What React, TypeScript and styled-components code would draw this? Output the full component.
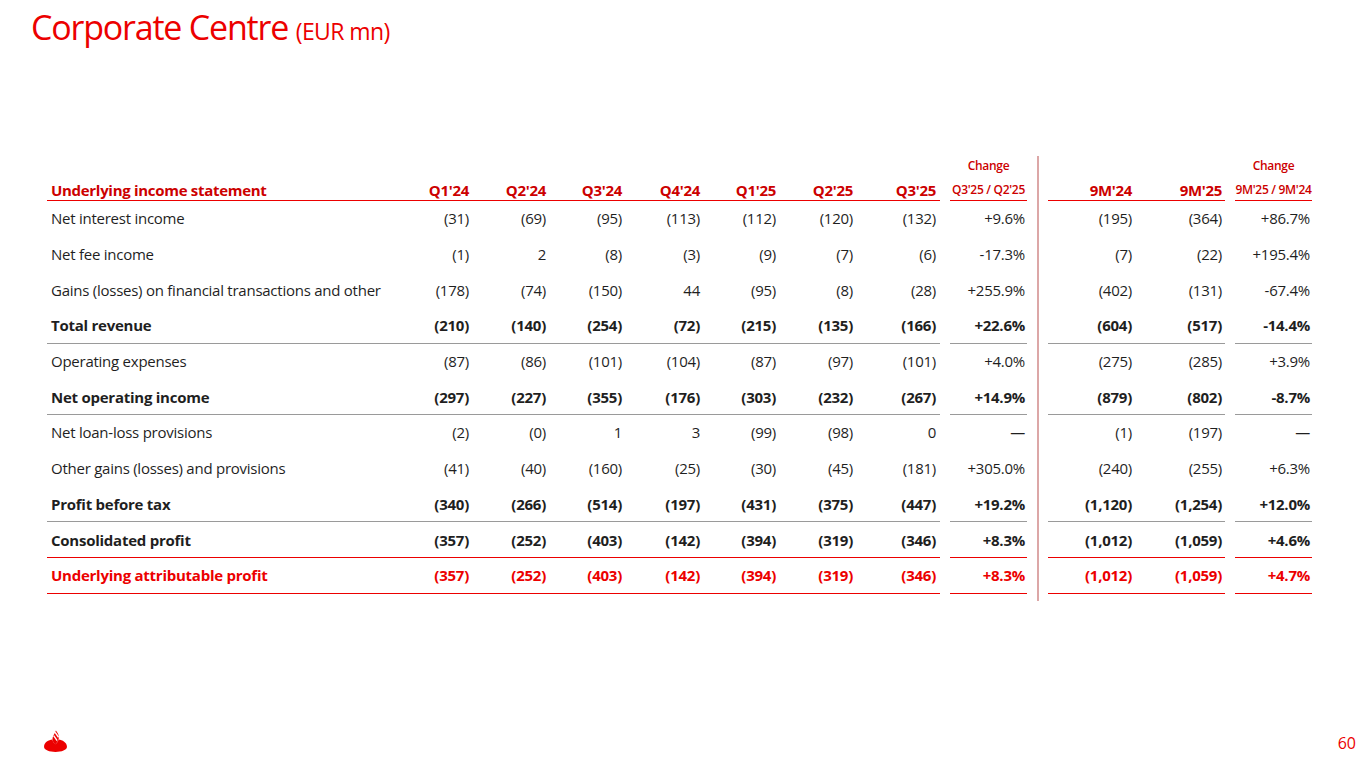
import React from "react";
import styled, { createGlobalStyle } from "styled-components";

const RED = "#ec0000";
const HEAD_RED = "#cc0000";
const INK = "#1f1f1f";

type Line = "none" | "gray" | "red";

type RowData = {
  label: string;
  q: string[];
  qChange: string;
  nine: string[];
  nineChange: string;
  bold?: boolean;
  red?: boolean;
  line?: Line;
};

const rows: RowData[] = [
  { label: "Net interest income", q: ["(31)", "(69)", "(95)", "(113)", "(112)", "(120)", "(132)"], qChange: "+9.6%", nine: ["(195)", "(364)"], nineChange: "+86.7%" },
  { label: "Net fee income", q: ["(1)", "2", "(8)", "(3)", "(9)", "(7)", "(6)"], qChange: "-17.3%", nine: ["(7)", "(22)"], nineChange: "+195.4%" },
  { label: "Gains (losses) on financial transactions and other", q: ["(178)", "(74)", "(150)", "44", "(95)", "(8)", "(28)"], qChange: "+255.9%", nine: ["(402)", "(131)"], nineChange: "-67.4%" },
  { label: "Total revenue", q: ["(210)", "(140)", "(254)", "(72)", "(215)", "(135)", "(166)"], qChange: "+22.6%", nine: ["(604)", "(517)"], nineChange: "-14.4%", bold: true, line: "gray" },
  { label: "Operating expenses", q: ["(87)", "(86)", "(101)", "(104)", "(87)", "(97)", "(101)"], qChange: "+4.0%", nine: ["(275)", "(285)"], nineChange: "+3.9%" },
  { label: "Net operating income", q: ["(297)", "(227)", "(355)", "(176)", "(303)", "(232)", "(267)"], qChange: "+14.9%", nine: ["(879)", "(802)"], nineChange: "-8.7%", bold: true, line: "gray" },
  { label: "Net loan-loss provisions", q: ["(2)", "(0)", "1", "3", "(99)", "(98)", "0"], qChange: "—", nine: ["(1)", "(197)"], nineChange: "—" },
  { label: "Other gains (losses) and provisions", q: ["(41)", "(40)", "(160)", "(25)", "(30)", "(45)", "(181)"], qChange: "+305.0%", nine: ["(240)", "(255)"], nineChange: "+6.3%" },
  { label: "Profit before tax", q: ["(340)", "(266)", "(514)", "(197)", "(431)", "(375)", "(447)"], qChange: "+19.2%", nine: ["(1,120)", "(1,254)"], nineChange: "+12.0%", bold: true, line: "gray" },
  { label: "Consolidated profit", q: ["(357)", "(252)", "(403)", "(142)", "(394)", "(319)", "(346)"], qChange: "+8.3%", nine: ["(1,012)", "(1,059)"], nineChange: "+4.6%", bold: true, line: "red" },
  { label: "Underlying attributable profit", q: ["(357)", "(252)", "(403)", "(142)", "(394)", "(319)", "(346)"], qChange: "+8.3%", nine: ["(1,012)", "(1,059)"], nineChange: "+4.7%", bold: true, red: true, line: "red" },
];

const quarters = ["Q1'24", "Q2'24", "Q3'24", "Q4'24", "Q1'25", "Q2'25", "Q3'25"];

const GlobalStyle = createGlobalStyle`
  html, body {
    margin: 0;
    padding: 0;
    background: #ffffff;
  }
  body {
    font-family: "Open Sans", "Liberation Sans", sans-serif;
    color: ${INK};
  }
`;

const Slide = styled.div`
  width: 1365px;
  height: 768px;
  overflow: hidden;
  display: flex;
  flex-direction: column;
  box-sizing: border-box;
`;

const Title = styled.h1`
  margin: 0;
  padding: 7px 0 0 31px;
  font-family: "Open Sans", sans-serif;
  font-weight: 400;
  font-size: 34px;
  letter-spacing: -1.2px;
  line-height: 40px;
  color: ${RED};
`;

const TitleUnit = styled.span`
  font-size: 23px;
  letter-spacing: -0.6px;
`;

const Table = styled.div`
  display: flex;
  margin: 103px 0 0 47px;
`;

const Block = styled.div`
  display: flex;
  flex-direction: column;
`;

const Divider = styled.div`
  width: 2px;
  margin: 2px 9px -7px 10px;
  background: #dca7a7;
  align-self: stretch;
`;

const Row = styled.div<{ $height: number }>`
  display: flex;
  gap: 10px;
  height: ${({ $height }) => $height}px;
`;

const lineColor = (line: Line) =>
  line === "red" ? RED : line === "gray" ? "#9a9a9a" : "transparent";

const Group = styled.div<{ $cols: string; $line: Line; $width: number }>`
  display: grid;
  grid-template-columns: ${({ $cols }) => $cols};
  width: ${({ $width }) => $width}px;
  box-sizing: border-box;
  align-items: center;
  border-bottom: 1px solid ${({ $line }) => lineColor($line)};
`;

const Cell = styled.div<{ $bold?: boolean; $red?: boolean; $pad?: number }>`
  text-align: right;
  padding-right: ${({ $pad }) => $pad ?? 0}px;
  font-size: 15px;
  letter-spacing: -0.25px;
  white-space: nowrap;
  font-weight: ${({ $bold }) => ($bold ? 700 : 400)};
  color: ${({ $red }) => ($red ? RED : INK)};
`;

const LabelCell = styled(Cell)`
  text-align: left;
  padding-left: 4px;
`;

const HeadCell = styled.div<{ $align?: string; $pad?: number }>`
  text-align: ${({ $align }) => $align ?? "right"};
  padding-right: ${({ $pad }) => $pad ?? 0}px;
  padding-left: ${({ $align }) => ($align === "left" ? 4 : 0)}px;
  font-size: 15px;
  line-height: 18px;
  letter-spacing: -0.3px;
  font-weight: 700;
  color: ${HEAD_RED};
  white-space: nowrap;
  align-self: end;
  padding-bottom: 2px;
`;

const SmallHead = styled.div<{ $top?: boolean }>`
  text-align: center;
  font-size: 12px;
  line-height: 15px;
  font-weight: 600;
  letter-spacing: -0.3px;
  color: ${HEAD_RED};
  white-space: nowrap;
  align-self: ${({ $top }) => ($top ? "start" : "end")};
  padding-top: ${({ $top }) => ($top ? 4 : 0)}px;
  padding-bottom: ${({ $top }) => ($top ? 0 : 3)}px;
`;

const Footer = styled.div`
  margin-top: auto;
  display: flex;
  align-items: center;
  justify-content: space-between;
  padding: 0 9px 7px 43px;
  height: 40px;
`;

const PageNumber = styled.span`
  font-size: 16px;
  color: ${RED};
  font-family: "Open Sans", sans-serif;
  padding-top: 4px;
`;

const A_COLS = "338px 84px 77px 76px 78px 76px 77px 83px";
const A_WIDTH = 893;
const B_WIDTH = 77;
const C_COLS = "87px 90px";
const C_WIDTH = 177;

const CHANGE_H = 27;
const HEAD_H = 20;
const ROW_H = 35.7;

const Flame = () => (
  <svg width="25" height="24" viewBox="0 0 24 22">
    <path
      d="M1 16.5 C1 12.2 5.5 10 9 9.6 C9.4 12 11 13.2 12 14 C13 13 14.6 11.6 14.9 9.5 C18.6 10 23 12.2 23 16.5 C23 19.6 17.8 21.5 12 21.5 C6.2 21.5 1 19.6 1 16.5 Z"
      fill={RED}
    />
    <path
      d="M12 14 C9.8 12.4 8.7 10.5 9.2 8 C9.7 5.4 11.6 3.6 12.4 1 C14.3 3.4 15.6 5.8 15.1 8.6 C14.7 10.9 13.4 12.6 12 14 Z"
      fill={RED}
    />
    <path d="M10.2 5.8 L13.6 10.6" stroke="#fff" strokeWidth="1.3" />
    <path d="M11.6 2.6 L14.9 7.4" stroke="#fff" strokeWidth="1.3" />
  </svg>
);

export default function App() {
  return (
    <Slide>
      <GlobalStyle />
      <Title>
        Corporate Centre <TitleUnit>(EUR mn)</TitleUnit>
      </Title>
      <Table>
        <Block>
          <Row $height={CHANGE_H}>
            <Group $cols={A_COLS} $line="none" $width={A_WIDTH} />
            <Group $cols="1fr" $line="none" $width={B_WIDTH}>
              <SmallHead $top>Change</SmallHead>
            </Group>
          </Row>
          <Row $height={HEAD_H}>
            <Group $cols={A_COLS} $line="red" $width={A_WIDTH}>
              <HeadCell $align="left">Underlying income statement</HeadCell>
              {quarters.map((q) => (
                <HeadCell key={q}>{q}</HeadCell>
              ))}
            </Group>
            <Group $cols="1fr" $line="red" $width={B_WIDTH}>
              <SmallHead>Q3'25 / Q2'25</SmallHead>
            </Group>
          </Row>
          {rows.map((r) => (
            <Row key={r.label} $height={ROW_H}>
              <Group $cols={A_COLS} $line={r.line ?? "none"} $width={A_WIDTH}>
                <LabelCell $bold={r.bold} $red={r.red}>
                  {r.label}
                </LabelCell>
                {r.q.map((v, i) => (
                  <Cell key={i} $bold={r.bold} $red={r.red}>
                    {v}
                  </Cell>
                ))}
              </Group>
              <Group $cols="1fr" $line={r.line ?? "none"} $width={B_WIDTH}>
                <Cell $bold={r.bold} $red={r.red} $pad={2}>
                  {r.qChange}
                </Cell>
              </Group>
            </Row>
          ))}
        </Block>
        <Divider />
        <Block>
          <Row $height={CHANGE_H}>
            <Group $cols={C_COLS} $line="none" $width={C_WIDTH} />
            <Group $cols="1fr" $line="none" $width={B_WIDTH}>
              <SmallHead $top>Change</SmallHead>
            </Group>
          </Row>
          <Row $height={HEAD_H}>
            <Group $cols={C_COLS} $line="red" $width={C_WIDTH}>
              <HeadCell $pad={3}>9M'24</HeadCell>
              <HeadCell $pad={3}>9M'25</HeadCell>
            </Group>
            <Group $cols="1fr" $line="red" $width={B_WIDTH}>
              <SmallHead>9M'25 / 9M'24</SmallHead>
            </Group>
          </Row>
          {rows.map((r) => (
            <Row key={r.label} $height={ROW_H}>
              <Group $cols={C_COLS} $line={r.line ?? "none"} $width={C_WIDTH}>
                {r.nine.map((v, i) => (
                  <Cell key={i} $bold={r.bold} $red={r.red} $pad={3}>
                    {v}
                  </Cell>
                ))}
              </Group>
              <Group $cols="1fr" $line={r.line ?? "none"} $width={B_WIDTH}>
                <Cell $bold={r.bold} $red={r.red} $pad={2}>
                  {r.nineChange}
                </Cell>
              </Group>
            </Row>
          ))}
        </Block>
      </Table>
      <Footer>
        <Flame />
        <PageNumber>60</PageNumber>
      </Footer>
    </Slide>
  );
}
